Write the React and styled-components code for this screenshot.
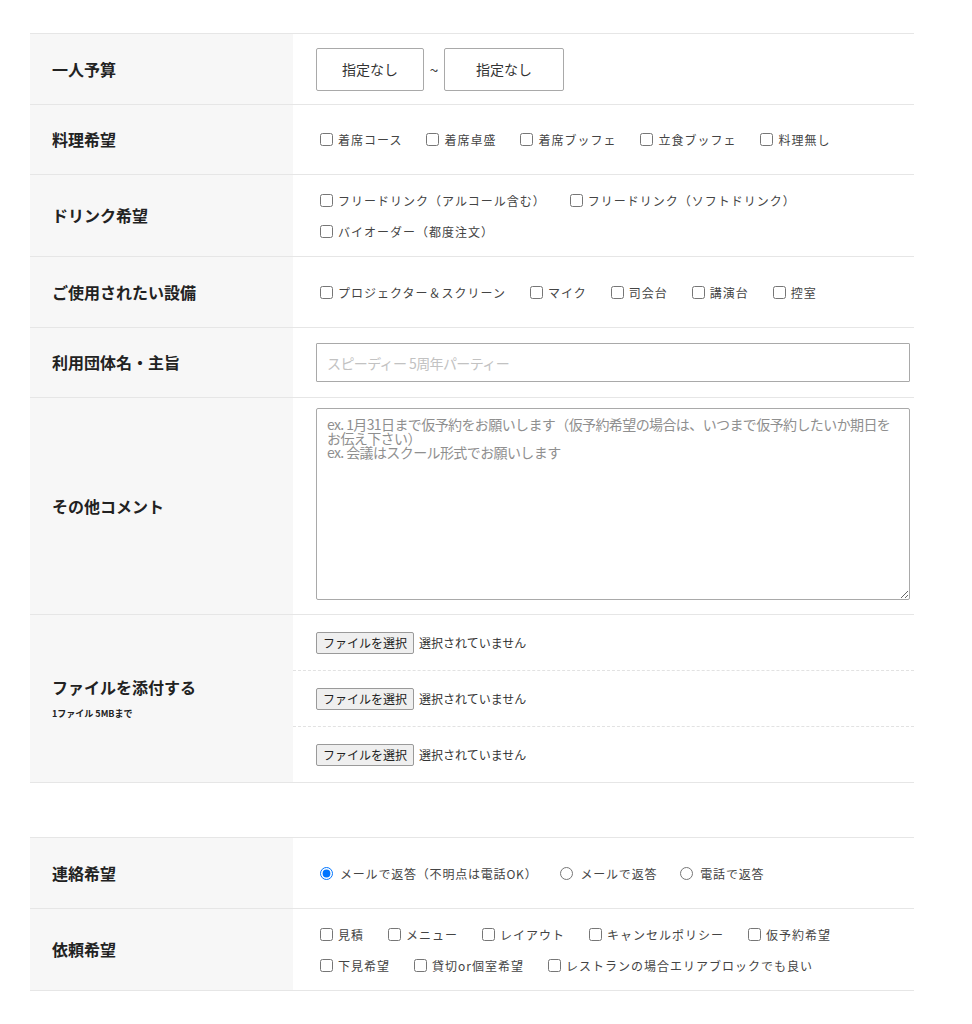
import React from "react";
import styled, { createGlobalStyle } from "styled-components";

const GlobalStyle = createGlobalStyle`
  * { box-sizing: border-box; }
  body {
    margin: 0;
    background: #fff;
    color: #222;
    font-family: "Noto Sans CJK JP", "Noto Sans", sans-serif;
  }
`;

const Page = styled.div`
  padding: 33px 58px 40px 30px;
`;

const FormTable = styled.div`
  border-top: 1px solid #e6e6e6;
  margin-bottom: ${(p) => p.$gap || 0}px;
`;

const Row = styled.div`
  display: grid;
  grid-template-columns: 263px 1fr;
  border-bottom: 1px solid #e6e6e6;
`;

const Th = styled.div`
  background: #f7f7f7;
  padding: 0 22px;
  display: flex;
  flex-direction: column;
  justify-content: center;
  font-size: 16px;
  font-weight: 700;
  color: #222;
  line-height: 1.4;
`;

const Note = styled.span`
  display: block;
  margin-top: 10px;
  font-size: 9px;
  font-weight: 700;
  color: #222;
`;

const Td = styled.div`
  min-height: 69.5px;
  padding: ${(p) => p.$pad || "10px 4px 9px 23px"};
  display: flex;
  flex-direction: ${(p) => (p.$column ? "column" : "row")};
  align-items: ${(p) => (p.$column ? "stretch" : "center")};
`;

const RangeWrap = styled.div`
  display: flex;
  align-items: center;
`;

const Select = styled.select`
  appearance: none;
  width: ${(p) => p.$w}px;
  height: 43px;
  border: 1px solid #a9a9a9;
  border-radius: 2px;
  background: #fff;
  font-family: inherit;
  font-size: 14px;
  color: #333;
  text-align: center;
  text-align-last: center;
`;

const Tilde = styled.span`
  width: 20px;
  text-align: center;
  font-size: 16px;
  color: #444;
`;

const OptionGroup = styled.div`
  display: flex;
  flex-wrap: wrap;
  align-items: center;
`;

const OptionItem = styled.label`
  display: inline-flex;
  align-items: center;
  height: 31px;
  margin-right: ${(p) => (p.$radio ? 19 : 20)}px;
  font-size: 12px;
  letter-spacing: ${(p) => (p.$radio ? 0.8 : 1)}px;
  color: #444;
`;

const Box = styled.input`
  width: 13px;
  height: 13px;
  margin: 0 ${(p) => (p.type === "radio" ? 7 : 5)}px 0 4px;
  flex: none;
`;

const TextInput = styled.input`
  width: 100%;
  height: 39px;
  padding: 0 10px;
  border: 1px solid #a9a9a9;
  border-radius: 1px;
  font-family: inherit;
  font-size: 14px;
  letter-spacing: -0.6px;
  color: #333;
  &::placeholder { color: #c2c2c2; }
`;

const TextArea = styled.textarea`
  display: block;
  width: 100%;
  height: 192px;
  padding: 8px 10px;
  border: 1px solid #a9a9a9;
  border-radius: 2px;
  font-family: inherit;
  font-size: 14px;
  line-height: 14px;
  letter-spacing: -0.6px;
  color: #333;
  resize: vertical;
  &::placeholder { color: #8f8f8f; }
`;

const FileList = styled.div`
  height: 167px;
  display: flex;
  flex-direction: column;
`;

const FileSlot = styled.div`
  flex: 1;
  padding-left: 23px;
  display: flex;
  align-items: center;
  & + & { border-top: 1px dashed #e2e2e2; }
`;

const FileButton = styled.button`
  height: 22px;
  padding: 0 6px;
  border: 1px solid #9a9a9a;
  border-radius: 2px;
  background: #efefef;
  font-family: inherit;
  font-size: 12px;
  color: #222;
`;

const FileStatus = styled.span`
  margin-left: 5px;
  font-size: 12px;
  color: #333;
`;

function Options({ items, type = "checkbox", name, checked }) {
  const radio = type === "radio";
  return (
    <OptionGroup>
      {items.map((t, i) => (
        <OptionItem key={t} $radio={radio}>
          <Box type={type} name={name} defaultChecked={checked === i} />
          {t}
        </OptionItem>
      ))}
    </OptionGroup>
  );
}

function FileField() {
  return (
    <FileSlot>
      <FileButton type="button">ファイルを選択</FileButton>
      <FileStatus>選択されていません</FileStatus>
    </FileSlot>
  );
}

export default function App() {
  return (
    <>
      <GlobalStyle />
      <Page>
        <FormTable $gap={54}>
          <Row>
            <Th>一人予算</Th>
            <Td>
              <RangeWrap>
                <Select $w={108}>
                  <option>指定なし</option>
                </Select>
                <Tilde>~</Tilde>
                <Select $w={120}>
                  <option>指定なし</option>
                </Select>
              </RangeWrap>
            </Td>
          </Row>
          <Row>
            <Th>料理希望</Th>
            <Td>
              <Options items={["着席コース", "着席卓盛", "着席ブッフェ", "立食ブッフェ", "料理無し"]} />
            </Td>
          </Row>
          <Row>
            <Th>ドリンク希望</Th>
            <Td>
              <Options
                items={[
                  "フリードリンク（アルコール含む）",
                  "フリードリンク（ソフトドリンク）",
                  "バイオーダー（都度注文）",
                ]}
              />
            </Td>
          </Row>
          <Row>
            <Th>ご使用されたい設備</Th>
            <Td>
              <Options items={["プロジェクター＆スクリーン", "マイク", "司会台", "講演台", "控室"]} />
            </Td>
          </Row>
          <Row>
            <Th>利用団体名・主旨</Th>
            <Td>
              <TextInput type="text" placeholder="スピーディー 5周年パーティー" />
            </Td>
          </Row>
          <Row>
            <Th>その他コメント</Th>
            <Td $pad="10px 4px 14px 23px">
              <TextArea
                placeholder={
                  "ex. 1月31日まで仮予約をお願いします（仮予約希望の場合は、いつまで仮予約したいか期日をお伝え下さい）\nex. 会議はスクール形式でお願いします"
                }
              />
            </Td>
          </Row>
          <Row>
            <Th>
              ファイルを添付する
              <Note>1ファイル 5MBまで</Note>
            </Th>
            <Td $column $pad="0">
              <FileList>
                <FileField />
                <FileField />
                <FileField />
              </FileList>
            </Td>
          </Row>
        </FormTable>

        <FormTable>
          <Row>
            <Th>連絡希望</Th>
            <Td>
              <Options
                type="radio"
                name="contact"
                checked={0}
                items={["メールで返答（不明点は電話OK）", "メールで返答", "電話で返答"]}
              />
            </Td>
          </Row>
          <Row>
            <Th>依頼希望</Th>
            <Td>
              <Options
                items={[
                  "見積",
                  "メニュー",
                  "レイアウト",
                  "キャンセルポリシー",
                  "仮予約希望",
                  "下見希望",
                  "貸切or個室希望",
                  "レストランの場合エリアブロックでも良い",
                ]}
              />
            </Td>
          </Row>
        </FormTable>
      </Page>
    </>
  );
}
